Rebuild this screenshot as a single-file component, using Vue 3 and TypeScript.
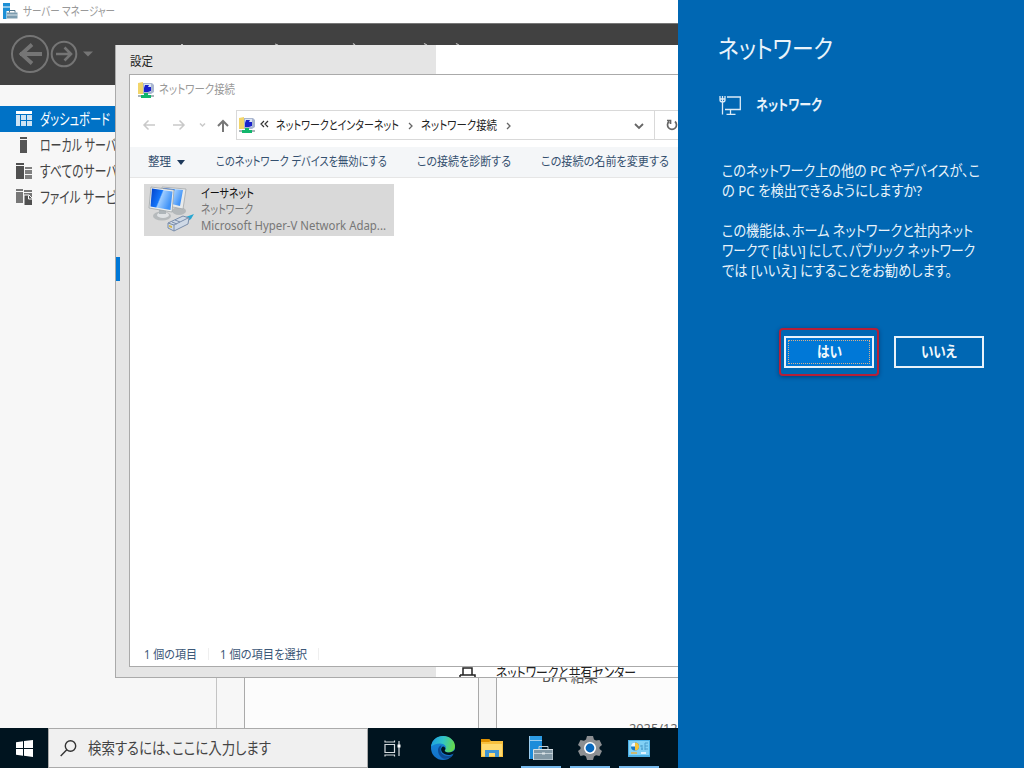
<script setup lang="ts">
import { h } from 'vue'
import type { FunctionalComponent } from 'vue'

interface LabelProps {
  t: string
  w: number
  s: number
}

// A single line of UI text fitted to a given width.
const Label: FunctionalComponent<LabelProps> = (p) => {
  const height = Math.ceil(p.s * 1.34)
  return h('svg', { class: 'label', width: p.w, height }, [
    h(
      'text',
      { x: 0, y: height / 2 + p.s * 0.37, 'font-size': p.s, textLength: p.w, lengthAdjust: 'spacingAndGlyphs' },
      p.t,
    ),
  ])
}
Label.props = ['t', 'w', 's']

const question: LabelProps[] = [
  { t: 'このネットワーク上の他の PC やデバイスが、こ', w: 258, s: 15 },
  { t: 'の PC を検出できるようにしますか?', w: 200, s: 15 },
]
const advice: LabelProps[] = [
  { t: 'この機能は、ホーム ネットワークと社内ネット', w: 251, s: 15 },
  { t: 'ワークで [はい] にして、パブリック ネットワーク', w: 253, s: 15 },
  { t: 'では [いいえ] にすることをお勧めします。', w: 230, s: 15 },
]
</script>

<template>
  <div class="desktop">
    <main class="manager">
      <header class="manager-title">
        <svg width="16" height="17" viewBox="0 0 16 17">
          <path d="M1 0h7v3.500H1zM1 4.500h7V8H4.500v8H1z" fill="#1c8fd6" />
          <path d="M5 9.500h10.500v6H5z" fill="#7c9caf" />
          <path d="M7.500 9.500V7.500h5.500v2" fill="none" stroke="#54778c" />
          <path d="M5 12h10.500" stroke="#d8e4ea" />
        </svg>
        <Label t="サーバー マネージャー" :w="92" :s="12.5" />
      </header>
      <div class="ribbon">
        <svg width="480" height="62" viewBox="0 23 480 62">
          <g fill="none" stroke="#757575" stroke-width="2">
            <circle cx="30" cy="54" r="18" />
            <circle cx="64" cy="54" r="12.3" />
            <path d="M20 54h22M32 44.500L21.500 54 32 63.500" stroke-width="3.800" />
            <path d="M56 54h15M64.500 47.500L71 54l-6.500 6.500" stroke-width="2.600" />
          </g>
          <path d="M83 51.500h10l-5 5z" fill="#757575" />
          <path d="M181 44.500h2M275 44l3 1M353 43.500l2 1.500M424 43.500l3 1.500M456 43.500l3 1.500" stroke="#bbb" stroke-width="1.200" />
        </svg>
      </div>
      <div class="manager-body">
        <nav class="side">
          <div class="side-item active">
            <svg width="16" height="16" viewBox="0 0 16 16" fill="#fff">
              <path d="M0 0h16v3H0z" />
              <path d="M0 4h4v11H0zM5 4h5v5H5zM11 4h5v5h-5zM5 10h5v5H5zM11 10h5v5h-5z" fill="#cfe4f4" />
            </svg>
            <Label t="ダッシュボード" :w="70" :s="15.5" />
          </div>
          <div class="side-item">
            <svg width="16" height="16" viewBox="0 0 16 16" fill="#555">
              <path d="M4 0h7v2H4zM4 3h7v13H4z" />
            </svg>
            <Label t="ローカル サーバー" :w="87" :s="15.5" />
          </div>
          <div class="side-item">
            <svg width="16" height="16" viewBox="0 0 16 16">
              <path d="M0 0h8v2H0zM0 3h8v13H0z" fill="#505050" />
              <path d="M9 4h7v2H9zM9 7h7v4H9zM9 12h7v4H9z" fill="#808080" />
            </svg>
            <Label t="すべてのサーバー" :w="89" :s="15.5" />
          </div>
          <div class="side-item">
            <svg width="16" height="16" viewBox="0 0 16 16">
              <path d="M0 0h7v2H0zM0 3h7v11H0zM8 1h8v2H8zM8 4h8v4H8z" fill="#777" />
              <path d="M8 6h5l3.500 3.500v7H8z" fill="#505050" stroke="#f7f7f7" />
              <path d="M12.500 6.500V10H16" fill="none" stroke="#fff" />
            </svg>
            <Label t="ファイル サービス" :w="87" :s="15.5" />
          </div>
        </nav>
        <section class="tiles">
          <div class="tile"></div>
          <div class="tile tile-wide">
            <Label class="bpa" t="BPA 結果" :w="56" :s="15" />
            <Label class="date" t="2025/12/08" :w="68" :s="12.5" />
          </div>
        </section>
      </div>
    </main>

    <section class="settings">
      <div class="settings-nav"></div>
      <Label class="settings-title" t="設定" :w="23" :s="12.5" />
      <span class="marker"></span>
      <div class="related">
        <svg width="17" height="14" viewBox="0 0 17 14" fill="none" stroke="#222" stroke-width="1.500">
          <path d="M4 8V1h9v7M1 8h15v6M1 8v6" />
        </svg>
        <Label t="ネットワークと共有センター" :w="140" :s="15" />
      </div>
    </section>

    <section class="explorer">
      <header class="explorer-title">
        <svg width="16" height="16" viewBox="0 0 16 16">
          <path d="M0 1l5-1v12H0z" fill="#f2d56a" />
          <path d="M5 1h9l2 2v7l-3 2H5z" fill="#aab6cf" />
          <path d="M6 2h7v8H6z" fill="#dbe5f3" />
          <path d="M7 3h4l-1 2h3v4l-3 1H6V6z" fill="#1a22cb" />
          <path d="M6 11h4v2h3v3H3v-3h3z" fill="#12b66c" />
          <path d="M0 14h3M13 14h3" stroke="#a9b4b9" stroke-width="2" />
        </svg>
        <Label t="ネットワーク接続" :w="76" :s="12.5" />
      </header>
      <div class="address-row">
        <svg class="arrows" width="106" height="30" viewBox="130 110 106 30" fill="none">
          <g stroke="#c9c9c9" stroke-width="1.500">
            <path d="M155 125h-11M148.500 120.500L144 125l4.500 4.500M173 125h11M179.500 120.500L184 125l-4.500 4.500" />
            <path d="M200 123.500l2.500 2.500 2.500-2.500" />
          </g>
          <path d="M223 132v-11M218 126l5-5 5 5" stroke="#777" stroke-width="2" />
        </svg>
        <div class="address">
          <svg width="16" height="16" viewBox="0 0 16 16">
            <path d="M0 1l5-1v12H0z" fill="#f2d56a" />
            <path d="M5 1h9l2 2v7l-3 2H5z" fill="#aab6cf" />
            <path d="M6 2h7v8H6z" fill="#dbe5f3" />
            <path d="M7 3h4l-1 2h3v4l-3 1H6V6z" fill="#1a22cb" />
            <path d="M6 11h4v2h3v3H3v-3h3z" fill="#12b66c" />
            <path d="M0 14h3M13 14h3" stroke="#a9b4b9" stroke-width="2" />
          </svg>
          <svg class="chevs" width="9" height="8" viewBox="0 0 9 8" fill="none" stroke="#333" stroke-width="1.200">
            <path d="M4 1L1 4l3 3M8 1L5 4l3 3" />
          </svg>
          <Label t="ネットワークとインターネット" :w="123" :s="12.5" />
          <svg class="sep" width="5" height="8" viewBox="0 0 5 8" fill="none" stroke="#666" stroke-width="1.300"><path d="M1 1l3 3-3 3" /></svg>
          <Label t="ネットワーク接続" :w="76" :s="12.5" />
          <svg class="sep" width="5" height="8" viewBox="0 0 5 8" fill="none" stroke="#666" stroke-width="1.300"><path d="M1 1l3 3-3 3" /></svg>
          <svg class="drop" width="10" height="7" viewBox="0 0 10 7" fill="none" stroke="#666" stroke-width="1.800"><path d="M1 1l4 4 4-4" /></svg>
        </div>
        <div class="refresh">
          <svg width="12" height="12" viewBox="0 0 12 12" fill="none" stroke="#666" stroke-width="1.700">
            <path d="M9 2.500A4.500 4.500 0 1 1 3 2.500M1 1.500h3.500V5" />
          </svg>
        </div>
      </div>
      <div class="commands">
        <Label t="整理" :w="23" :s="12.5" />
        <svg class="caret" width="8" height="5" viewBox="0 0 8 5"><path d="M0 0h8L4 5z" fill="#1e395b" /></svg>
        <Label class="cmd-disable" t="このネットワーク デバイスを無効にする" :w="171" :s="12.5" />
        <Label class="cmd" t="この接続を診断する" :w="94" :s="12.5" />
        <Label class="cmd" t="この接続の名前を変更する" :w="128" :s="12.5" />
      </div>
      <div class="files">
        <div class="adapter">
          <svg width="50" height="50" viewBox="0 0 50 50">
            <defs>
              <linearGradient id="scr" x1="0" y1="0" x2="1" y2="0.4">
                <stop offset="0" stop-color="#003fc8" />
                <stop offset="0.5" stop-color="#1476fa" />
                <stop offset="0.56" stop-color="#9dccff" />
                <stop offset="1" stop-color="#3f92f7" />
              </linearGradient>
            </defs>
            <ellipse cx="35" cy="27" rx="7" ry="4" fill="#b4b8ba" />
            <path d="M18 3l24 2-3 20-20-4z" fill="#e8eaeb" stroke="#9da2a5" stroke-width=".7" />
            <path d="M19 4l20 2-3 16-17-4z" fill="url(#scr)" />
            <ellipse cx="18" cy="32" rx="9" ry="4.500" fill="#b6babc" />
            <ellipse cx="19" cy="31" rx="6" ry="3" fill="#dfe2e4" />
            <path d="M15 24h7v6h-7z" fill="#aeb5b9" />
            <path d="M7 3l23 3-2 22-23-4z" fill="#eceeee" stroke="#979da1" stroke-width=".7" />
            <path d="M8 4.500l20.500 3-2 18.500L6.500 22.500z" fill="url(#scr)" />
            <path d="M39 34l11-4-3 5-6 4z" fill="#29a7d2" />
            <path d="M24 39l15-7 6 2-1 6-14 7-6-3z" fill="#cfd9e6" stroke="#7b8eaa" />
            <path d="M24 39l6 2 14-7M30 41v6M31 36l5 2M28 38l5 2" fill="none" stroke="#7b8eaa" />
            <path d="M25 41v2l3 1v-2z" fill="#d8b84b" />
          </svg>
          <div class="adapter-text">
            <Label class="name" t="イーサネット" :w="53" :s="12.5" />
            <Label t="ネットワーク" :w="52" :s="12.5" />
            <Label t="Microsoft Hyper-V Network Adap..." :w="185" :s="12" />
          </div>
        </div>
      </div>
      <footer class="status">
        <Label t="1 個の項目" :w="53" :s="12.5" />
        <i></i>
        <Label t="1 個の項目を選択" :w="87" :s="12.5" />
        <i></i>
      </footer>
    </section>

    <footer class="taskbar">
      <div class="start">
        <svg width="17" height="17" viewBox="0 0 17 17" fill="#fff">
          <path d="M0 2.300l7-1V8H0zM8 1.100L17 0v8H8zM0 9h7v6.800l-7-1zM8 9h9v8l-9-1.200z" />
        </svg>
      </div>
      <div class="search">
        <svg width="17" height="17" viewBox="0 0 17 17" fill="none" stroke="#333" stroke-width="1.400">
          <circle cx="10.500" cy="6" r="5.200" /><path d="M6.800 9.800L.7 16" />
        </svg>
        <Label t="検索するには、ここに入力します" :w="183" :s="15.5" />
      </div>
      <div class="app">
        <svg width="17" height="17" viewBox="0 0 17 17" fill="none" stroke="#d5dbde" stroke-width="1.200">
          <path d="M1 4.500h9.500v8H1zM1 .5v1.500h9.500V.5M1 16.500V15h9.500v1.500M15 1v15" /><path d="M13.500 4.500h3v3h-3z" fill="#fff" stroke="none" />
        </svg>
      </div>
      <div class="app edge">
        <svg width="24" height="24" viewBox="0 0 24 24">
          <defs>
            <linearGradient id="e1" x1="0" y1="0.2" x2="1" y2="0.4"><stop offset="0" stop-color="#1b9de2" /><stop offset=".5" stop-color="#32c4c6" /><stop offset="1" stop-color="#65d94b" /></linearGradient>
            <linearGradient id="e2" x1="0" y1="0" x2="0" y2="1"><stop offset="0" stop-color="#168bd8" /><stop offset="1" stop-color="#1370c9" /></linearGradient>
          </defs>
          <circle cx="12" cy="12" r="12" fill="url(#e2)" />
          <path d="M0 10.500C1 4 6 0 12 0c7 0 12 5 12 10 0 4-3 6.500-6.500 6.500-3 0-4.500-1.200-3.500-2.500 2.500-3.500-.5-6.500-5-6.500-4 0-7 1.500-9 3z" fill="url(#e1)" />
          <path d="M9.500 9.500C5 12 7 20 12 22.500c4 1 8-.5 10-3.500-7 2.500-13-.5-12.500-6 0-1.300.5-2.500 1.500-3.200z" fill="#0d4b94" />
          <path d="M12 10.500c-3 1.500-2.500 6 2 7.800 3 1.200 6.500.8 9-.8l1 2.500 1-8c-2 4-5.500 4.800-8 4.500-2.500-.3-4-1.200-3-2.500.8-1.200.5-3-2-3.500z" fill="#001420" />
        </svg>
      </div>
      <div class="app">
        <svg width="22" height="19" viewBox="0 0 22 19">
          <path d="M0 0h8l2 2h12v16H0z" fill="#f8c13e" />
          <path d="M0 0h8l1.500 2L8 3H0z" fill="#df9100" />
          <path d="M1 5h20v12H1z" fill="#ffdb70" />
          <path d="M4 18v-7h14v7h-4v-4H8v4z" fill="#3f95d4" />
        </svg>
      </div>
      <div class="app open">
        <svg width="24" height="24" viewBox="0 0 24 24">
          <path d="M0 0h13v4H0z" fill="#2c9be3" /><path d="M0 5h13v18H0z" fill="#1c8cda" />
          <path d="M0 4.500h13M.5 0v23" stroke="#9bcdef" fill="none" />
          <path d="M4.500 13.500h19.500V24H4.500z" fill="#8298a5" stroke="#d7e0e5" />
          <path d="M10 13v-2.500h9V13M5 17.500h19" stroke="#c3d0d7" fill="none" /><path d="M13 16.500h3v2h-3z" fill="#dce4e8" />
        </svg>
      </div>
      <div class="app open">
        <svg width="24" height="24" viewBox="0 0 24 24">
          <path d="M9 0h6l1 3.500 2 1.100L21.500 4l2.500 5-2.500 2v2l2.500 2-2.500 5-3.500-.8-2 1.200-1 3.600H9l-1-3.600-2-1.200-3.500.8L0 15l2.500-2v-2L0 9l2.500-5L6 4.700l2-1.200z" fill="#8c8f92" />
          <circle cx="12" cy="12" r="6" fill="#fff" /><circle cx="12" cy="12" r="4.400" fill="#0768bd" />
        </svg>
      </div>
      <div class="app open">
        <svg width="22" height="17" viewBox="0 0 22 17">
          <path d="M0 0h22v17H0z" fill="#4aafe5" /><path d="M1 1h20v14H1z" fill="#82d1f5" />
          <circle cx="7" cy="6.500" r="4" fill="#1678c6" /><path d="M7 6.500v-4a4 4 0 0 1 0 8z" fill="#f6c33c" /><path d="M3 6.500h4v-4a4 4 0 0 0-4 4z" fill="#e7f6ff" />
          <path d="M12 6h2M13 9h2M17 3h3M17 6h3M17 9h3M14 5v5M17 3v7" stroke="#4a9dcc" fill="none" />
          <path d="M3 13h6" stroke="#e0b14a" stroke-width="1.500" /><path d="M13 13h5" stroke="#fff" stroke-width="1.500" />
        </svg>
      </div>
    </footer>

    <aside class="flyout">
      <Label class="flyout-title" t="ネットワーク" :w="115" :s="25" />
      <div class="flyout-sub">
        <svg width="22" height="19" viewBox="0 0 22 19" fill="none" stroke="#dcebf7" stroke-width="1.300">
          <path d="M8 1h13.300v12.500H6M11.500 13.500V18M7.500 18.300h9M1 0v4q0 2 2.500 2T6 4V0M3.500 0v18.500M1 3h5" />
        </svg>
        <Label t="ネットワーク" :w="66" :s="14.5" />
      </div>
      <div class="para">
        <div v-for="line in question" :key="line.t" class="line"><Label v-bind="line" /></div>
      </div>
      <div class="para">
        <div v-for="line in advice" :key="line.t" class="line"><Label v-bind="line" /></div>
      </div>
      <div class="buttons">
        <div class="highlight">
          <button class="btn primary"><span><Label t="はい" :w="25" :s="14.5" /></span></button>
        </div>
        <button class="btn"><Label t="いいえ" :w="36" :s="14.5" /></button>
      </div>
    </aside>
  </div>
</template>

<style>
body { margin: 0; }
.label {
  display: block;
  flex: none;
  overflow: visible;
  font-family: 'Noto Sans', 'Noto Sans CJK JP', sans-serif;
  font-feature-settings: 'palt';
}
.label text { fill: currentColor; white-space: pre; }
</style>

<style scoped>
.desktop { position: relative; width: 1024px; height: 768px; overflow: hidden; background: #f7f7f7; }
.desktop svg { flex: none; }
.manager { height: 728px; display: flex; flex-direction: column; overflow: hidden; }
.manager-title { box-sizing: border-box; flex: none; height: 23px; display: flex; align-items: center; gap: 5px; padding-left: 2px; background: #fff; color: #999; }
.ribbon { flex: none; height: 62px; background: #414141; box-shadow: inset 0 1px #777; }
.ribbon svg { display: block; }
.manager-body { flex: none; height: 643px; display: flex; }
.side { box-sizing: border-box; width: 217px; padding-top: 21px; border-right: 1px solid #c4c4c4; background: #f7f7f7; }
.side-item { height: 26px; display: flex; align-items: center; gap: 8px; padding-left: 16px; color: #444; }
.side-item.active { background: #0072c6; color: #fff; }
.tiles { flex: 1; display: flex; gap: 17px; padding-left: 27px; }
.tile { box-sizing: border-box; flex: none; width: 235px; border: solid #aaa; border-width: 0 1px; background: #fcfcfc; }
.tile-wide { width: 300px; padding: 581px 0 0 45px; }
.bpa { color: #555; }
.date { margin: 33px 0 0 87px; color: #666; }

.settings { position: absolute; left: 115px; top: 45px; width: 563px; height: 633px; box-sizing: border-box; border: solid #aaa; border-width: 0 0 1px 1px; background: #fff; overflow: hidden; }
.settings-nav { width: 320px; height: 100%; background: #e5e5e5; }
.settings-title { position: absolute; left: 14px; top: 8px; color: #222; }
.marker { position: absolute; left: 0; top: 212px; width: 4px; height: 24px; background: #0078d7; }
.related { position: absolute; left: 343px; top: 617px; display: flex; gap: 20px; color: #222; }
.related svg:first-child { margin-top: 5px; }

.explorer { position: absolute; left: 129px; top: 74px; width: 549px; height: 593px; box-sizing: border-box; border: 1px solid #aaa; border-right: 0; background: #fff; display: flex; flex-direction: column; overflow: hidden; }
.explorer-title { height: 29px; display: flex; align-items: center; gap: 5px; padding-left: 8px; color: #999; }
.address-row { height: 30px; display: flex; margin-top: 6px; }
.address { box-sizing: border-box; flex: none; width: 419px; height: 30px; display: flex; align-items: center; border: 1px solid #d9d9d9; padding-left: 2px; color: #222; }
.chevs { margin: 0 7px 2px 5px; }
.sep { margin: 2px 8px 0 9px; }
.drop { margin: 2px 10px 0 auto; }
.refresh { flex: none; width: 40px; box-sizing: border-box; display: flex; align-items: center; border: 1px solid #d9d9d9; border-left: 0; padding-left: 11px; }
.commands { box-sizing: border-box; height: 31px; margin-top: 7px; display: flex; align-items: center; padding: 0 0 1px 18px; background: #f4f6f8; border-bottom: 1px solid #e6e6e6; color: #34506f; }
.caret { margin: 1px 0 0 6px; }
.cmd-disable { margin-left: 31px; }
.cmd { margin-left: 30px; }
.files { flex: 1; padding: 6px 14px; }
.adapter { width: 250px; height: 52px; display: flex; background: #d9d9d9; }
.adapter-text { padding: 1px 0 0 7px; color: #777; }
.adapter-text .label { height: 16px; }
.adapter-text .name { color: #111; }
.status { box-sizing: border-box; height: 22px; display: flex; align-items: center; padding: 0 0 2px 14px; color: #3c5878; }
.status i { width: 1px; height: 12px; margin: 0 11px; background: #efefef; }

.taskbar { height: 40px; display: flex; background: #00141f; }
.start { width: 48px; display: flex; align-items: center; justify-content: center; }
.search { box-sizing: border-box; width: 320px; display: flex; align-items: center; gap: 11px; padding-left: 11px; border: 1px solid #aaa; background: #f0f0f0; color: #444; }
.app { box-sizing: border-box; width: 40px; margin-right: 9px; display: flex; align-items: center; justify-content: center; border-bottom: 2px solid transparent; padding-top: 2px; }
.app:nth-child(3) { margin-left: 4px; }
.edge { margin-left: 2px; }
.app.open { border-bottom-color: #76b9ed; }

.flyout { position: absolute; left: 678px; top: 0; width: 346px; height: 768px; box-sizing: border-box; padding: 32px 0 0 44px; background: #0067b3; color: #e9f3fa; }
.flyout-title { margin-left: -4px; }
.flyout-sub { display: flex; align-items: center; gap: 15px; margin: 29px 0 0 -3px; font-weight: 700; height: 20px; }
.flyout-sub + .para { margin-top: 45px; }
.para { margin-bottom: 20px; }
.line { height: 20px; display: flex; align-items: center; }
.buttons { display: flex; gap: 15px; align-items: center; margin: 48px 0 0 57px; }
.highlight { box-sizing: border-box; padding: 6px 3px 6px 3px; border: 2px solid #b51f38; border-radius: 4px; box-shadow: 0 1px 4px rgba(0, 25, 70, 0.5); }
.btn { box-sizing: border-box; width: 90px; height: 32px; padding: 0; display: flex; align-items: center; justify-content: center; border: 2px solid #e8f2fa; background: transparent; color: #f2f8fc; font-weight: 700; }
.btn.primary { background: #0078d7; padding: 2px; }
.btn.primary span { box-sizing: border-box; width: 100%; height: 100%; display: flex; align-items: center; justify-content: center; border: 1px dotted #d8b08a; }
</style>
